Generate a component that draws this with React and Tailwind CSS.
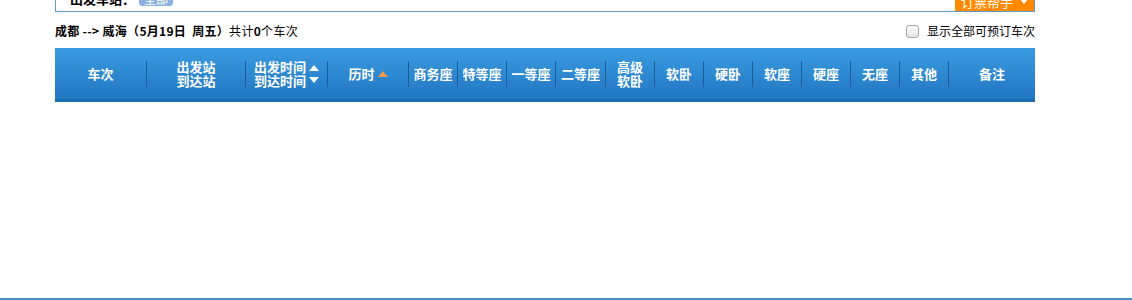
import { Fragment } from 'react';

const COLS = [
  { w: 'w-[91px]', label: ['车次'] },
  { w: 'w-[98px]', label: ['出发站', '到达站'] },
  { w: 'w-[81px]', label: ['出发时间', '到达时间'], sort: 'both' },
  { w: 'w-[80px]', label: ['历时'], sort: 'up' },
  { w: 'w-[48px]', label: ['商务座'] },
  { w: 'w-[48px]', label: ['特等座'] },
  { w: 'w-[48px]', label: ['一等座'] },
  { w: 'w-[49px]', label: ['二等座'] },
  { w: 'w-[48px]', label: ['高级', '软卧'] },
  { w: 'w-[48px]', label: ['软卧'] },
  { w: 'w-[48px]', label: ['硬卧'] },
  { w: 'w-[48px]', label: ['软座'] },
  { w: 'w-[48px]', label: ['硬座'] },
  { w: 'w-[48px]', label: ['无座'] },
  { w: 'w-[48px]', label: ['其他'] },
  { w: 'flex-1', label: ['备注'] },
];

function Tri({ dir, color }) {
  return (
    <svg width="10" height="6" viewBox="0 0 10 6" className="block">
      {dir === 'up'
        ? <polygon points="0,6 5,0 10,6" fill={color} />
        : <polygon points="0,0 10,0 5,6" fill={color} />}
    </svg>
  );
}

export default function App() {
  return (
    <div
      className="relative w-[1132px] h-[300px] bg-white overflow-hidden text-[12px] text-black"
      style={{ fontFamily: '"Noto Sans CJK SC", "Noto Sans", sans-serif' }}
    >
      <div className="ml-[55px] w-[980px]">
        {/* clipped search box */}
        <div className="h-[12px] overflow-hidden border-x border-b border-[#5e9cc4] flex items-end justify-between">
          <div className="flex items-center gap-[4px] pl-[14px] mb-[5px] leading-[14px] h-[14px]">
            <span className="font-bold text-[13px]">出发车站：</span>
            <span className="bg-[#8eb0dc] text-white rounded-[3px] px-[5px] leading-[14px]">全部</span>
          </div>
          <div className="h-[24px] w-[80px] bg-[#ff8a00] text-white flex items-center justify-center gap-[6px] text-[13px] leading-none pt-[4px] -mr-px">
            <span>订票帮手</span>
            <Tri dir="down" color="#ffffff" />
          </div>
        </div>

        {/* summary line */}
        <div className="flex items-center justify-between h-[14px] mt-[12px] leading-[14px]">
          <div className="tracking-[0.3px]">
            <span className="font-bold">成都 --&gt; 威海（5月19日&nbsp;&nbsp;周五）</span>
            <span>共计<b>0</b>个车次</span>
          </div>
          <label className="flex items-center gap-[8px]">
            <span className="w-[13px] h-[13px] rounded-[3px] border border-[#a6a6a6] bg-gradient-to-b from-[#fdfdfd] to-[#e6e6e6]" />
            <span>显示全部可预订车次</span>
          </label>
        </div>

        {/* table header */}
        <div className="mt-[10px] h-[54px] flex items-center bg-gradient-to-b from-[#3a9be0] to-[#2277c2] border-b-[3px] border-[#1d6db2] text-white font-bold text-[13px] leading-[14px]">
          {COLS.map((c, i) => (
            <Fragment key={i}>
              {i > 0 && <div className="w-px h-[26px] bg-[#1c5c99] shrink-0" />}
              <div className={`${c.w} shrink-0 flex items-center justify-center gap-[3px] text-center`}>
                <div>
                  {c.label.map((l) => (
                    <div key={l}>{l}</div>
                  ))}
                </div>
                {c.sort === 'both' && (
                  <div className="flex flex-col gap-[6px]">
                    <Tri dir="up" color="#ffffff" />
                    <Tri dir="down" color="#ffffff" />
                  </div>
                )}
                {c.sort === 'up' && <Tri dir="up" color="#f39a4c" />}
              </div>
            </Fragment>
          ))}
        </div>
      </div>

      <div className="absolute left-0 right-0 bottom-0 h-[2px] bg-[#4a8ec2]" />
    </div>
  );
}
